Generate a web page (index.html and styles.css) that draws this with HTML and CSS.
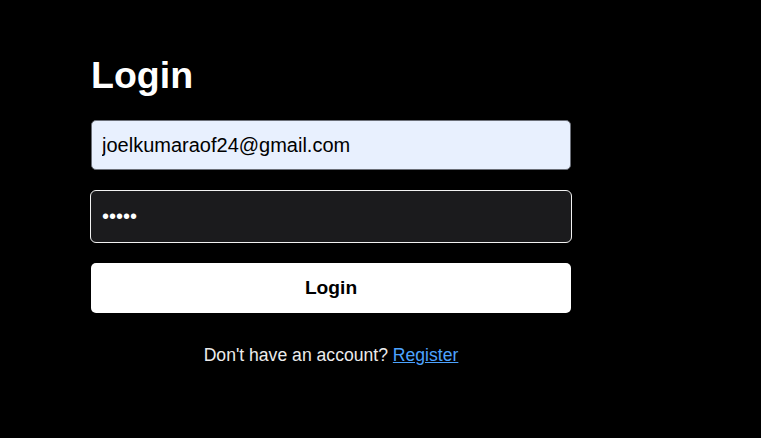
FILE: index.html
```html
<!DOCTYPE html>
<html lang="en">
<head>
<meta charset="utf-8">
<title>Login</title>
<link rel="stylesheet" href="styles.css">
</head>
<body>
<main class="page">
  <section class="card">
    <h1 class="title">Login</h1>
    <form class="form">
      <input class="field field-email" type="email" value="joelkumaraof24@gmail.com">
      <input class="field field-pass" type="password" value="12345">
      <button class="btn" type="button">Login</button>
    </form>
    <p class="foot">Don't have an account? <a class="link" href="#">Register</a></p>
  </section>
</main>
</body>
</html>
```

FILE: styles.css
```css
html, body {
  margin: 0;
  padding: 0;
  background: #000;
}
body {
  font-family: "Liberation Sans", Arial, sans-serif;
  color: #fff;
  width: 761px;
  height: 438px;
  overflow: hidden;
}
.page {
  padding: 55px 0 0 91px;
}
.card {
  width: 480px;
}
.title {
  margin: 0 0 25px 0;
  font-size: 37.5px;
  line-height: 40px;
  font-weight: 700;
  color: #fff;
}
.form {
  display: flex;
  flex-direction: column;
  gap: 20px;
}
.field {
  box-sizing: border-box;
  width: 100%;
  height: 50px;
  padding: 0 10px;
  border-radius: 5px;
  font-family: "Liberation Sans", Arial, sans-serif;
  font-size: 20px;
  outline: none;
  margin: 0;
}
.field-email {
  background: #e8f0fe;
  border: 1px solid #6b6f78;
  color: #000;
}
.field-pass {
  width: 482px;
  height: 53px;
  margin: 0 -1px;
  padding: 0 11px;
  background: #1b1b1d;
  border: 1px solid #f2f2f2;
  color: #fff;
  border-radius: 6px;
}
.btn {
  height: 50px;
  width: 100%;
  border: none;
  border-radius: 5px;
  background: #fff;
  color: #000;
  font-family: "Liberation Sans", Arial, sans-serif;
  font-size: 19.2px;
  font-weight: 700;
  cursor: pointer;
}
.foot {
  margin: 32px 0 0;
  text-align: center;
  font-size: 17.6px;
  line-height: 20px;
  color: #ececec;
}
.link {
  color: #4da3ff;
  text-decoration: underline;
}
```
